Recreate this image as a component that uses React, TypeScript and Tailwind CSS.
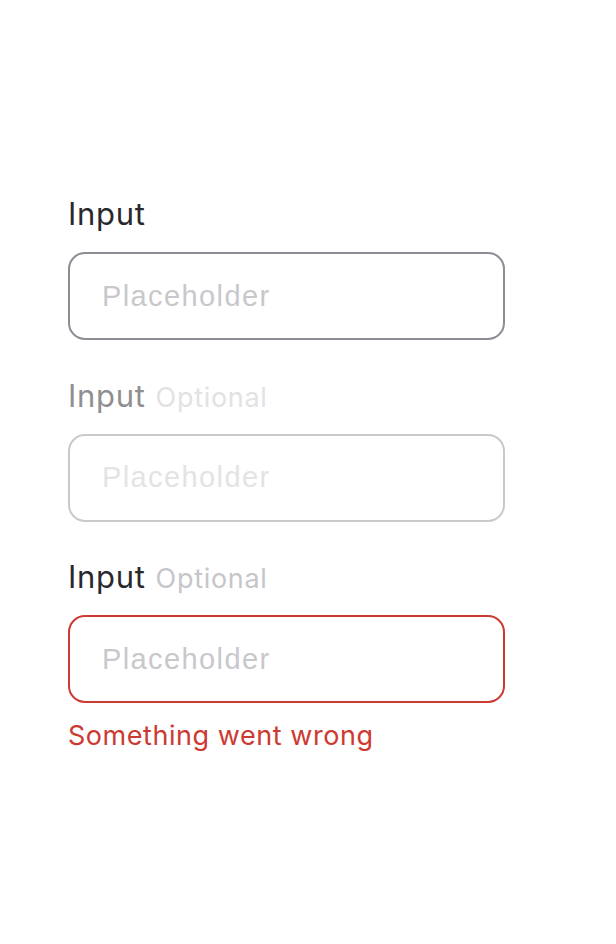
import React from "react";

type FieldProps = {
  optional?: boolean;
  disabled?: boolean;
  error?: string;
};

const Field: React.FC<FieldProps> = ({ optional, disabled, error }) => {
  const labelColor = disabled ? "text-[#8f8f91]" : "text-[#29292c]";
  const optionalColor = disabled ? "text-[#e2e2e4]" : "text-[#c6c6ca]";
  const borderColor = error
    ? "border-[#cc3a32]"
    : disabled
      ? "border-[#c9c9cb]"
      : "border-[#8d8d96]";
  const placeholderColor = disabled
    ? "placeholder:text-[#e3e3e5]"
    : "placeholder:text-[#c8c8cc]";

  return (
    <div className="flex flex-col">
      <label className={`block h-[36px] overflow-visible whitespace-nowrap text-[31px] leading-[36px] tracking-[0.7px] ${labelColor}`}>
        Input
        {optional && (
          <span className={`ml-[10px] text-[27px] tracking-[0.7px] ${optionalColor}`}>Optional</span>
        )}
      </label>
      <input
        disabled={disabled}
        placeholder="Placeholder"
        className={`mt-[20px] h-[88px] w-full rounded-[17px] border-2 bg-white px-[32px] text-[29px] tracking-[1.4px] outline-none [font-family:'Liberation_Sans',Arial,sans-serif] ${borderColor} ${placeholderColor}`}
      />
      {error && (
        <div className="mt-[16px] text-[27px] leading-[34px] tracking-[0.55px] text-[#cc3a32]">
          {error}
        </div>
      )}
    </div>
  );
};

export default function App() {
  return (
    <div className="min-h-[944px] bg-white [font-family:Inter,'Noto_Sans',sans-serif]">
      <div className="ml-[68px] flex w-[437px] flex-col gap-[37.5px] pt-[196px]">
        <Field />
        <Field optional disabled />
        <Field optional error="Something went wrong" />
      </div>
    </div>
  );
}
